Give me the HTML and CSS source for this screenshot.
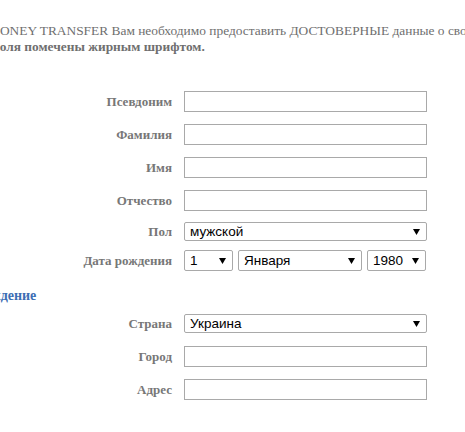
FILE: index.html
```html
<!DOCTYPE html>
<html lang="ru">
<head>
<meta charset="utf-8">
<title>Регистрация</title>
<link rel="stylesheet" href="styles.css">
</head>
<body>
<div class="page">
  <div class="intro">
    <p class="intro-line intro-line-1">MONEY TRANSFER Вам необходимо предоставить ДОСТОВЕРНЫЕ данные о своей личности.</p>
    <p class="intro-line intro-line-2"><b>поля помечены жирным шрифтом.</b></p>
  </div>

  <form class="form">
    <div class="row">
      <label class="label">Псевдоним</label>
      <input class="field" type="text">
    </div>
    <div class="row">
      <label class="label">Фамилия</label>
      <input class="field" type="text">
    </div>
    <div class="row">
      <label class="label">Имя</label>
      <input class="field" type="text">
    </div>
    <div class="row">
      <label class="label">Отчество</label>
      <input class="field" type="text">
    </div>
    <div class="row row-sel">
      <label class="label">Пол</label>
      <span class="sel sel-full"><span class="sel-text">мужской</span><svg class="arrow" width="7" height="6" viewBox="0 0 7 6"><path d="M0 0H7L3.5 6Z"/></svg></span>
    </div>
    <div class="row row-date">
      <label class="label">Дата рождения</label>
      <div class="date">
        <span class="sel sel-day"><span class="sel-text">1</span><svg class="arrow" width="7" height="6" viewBox="0 0 7 6"><path d="M0 0H7L3.5 6Z"/></svg></span>
        <span class="sel sel-month"><span class="sel-text">Января</span><svg class="arrow" width="7" height="6" viewBox="0 0 7 6"><path d="M0 0H7L3.5 6Z"/></svg></span>
        <span class="sel sel-year"><span class="sel-text">1980</span><svg class="arrow" width="7" height="6" viewBox="0 0 7 6"><path d="M0 0H7L3.5 6Z"/></svg></span>
      </div>
    </div>

    <h3 class="section">Местонахождение</h3>

    <div class="row row-sel row-country">
      <label class="label">Страна</label>
      <span class="sel sel-full"><span class="sel-text">Украина</span><svg class="arrow" width="7" height="6" viewBox="0 0 7 6"><path d="M0 0H7L3.5 6Z"/></svg></span>
    </div>
    <div class="row">
      <label class="label">Город</label>
      <input class="field" type="text">
    </div>
    <div class="row">
      <label class="label">Адрес</label>
      <input class="field" type="text">
    </div>
  </form>
</div>
</body>
</html>
```

FILE: styles.css
```css
html, body {
  margin: 0;
  padding: 0;
  background: #ffffff;
  overflow: hidden;
}

.page {
  width: 465px;
  font-family: "Liberation Serif", "Times New Roman", serif;
  color: #777777;
}

.intro {
  padding-top: 23px;
}

.intro-line {
  margin: 0;
  font-size: 13.4px;
  line-height: 16px;
  white-space: nowrap;
  color: #6f6f6f;
}

.intro-line-1 {
  margin-left: -12px;
}

.intro-line-2 {
  margin-left: -8px;
}

.form {
  margin: 0;
  padding-top: 36px;
  display: flex;
  flex-direction: column;
}

.row {
  display: grid;
  grid-template-columns: 172px 243px;
  column-gap: 12px;
  align-items: center;
  height: 21px;
  margin-bottom: 12px;
}

.label {
  text-align: right;
  font-weight: bold;
  font-size: 13px;
  color: #777777;
}

.field {
  box-sizing: border-box;
  width: 243px;
  height: 21px;
  margin: 0;
  padding: 0 4px;
  border: 1px solid #a9a9a9;
  background: #ffffff;
}

.row-sel {
  margin-top: -2px;
}

.row-date {
  margin-top: -4px;
}

.sel {
  box-sizing: border-box;
  position: relative;
  display: flex;
  align-items: center;
  height: 19px;
  padding: 0 0 0 5px;
  border: 1px solid #a9a9a9;
  border-radius: 2px;
  background: #ffffff;
  font-family: Arimo, "Liberation Sans", Arial, sans-serif;
  font-size: 13.5px;
  color: #000000;
}

.sel-full {
  width: 243px;
}

.arrow {
  position: absolute;
  right: 6px;
  top: 6px;
  fill: #000000;
}

.date {
  display: flex;
  gap: 5px;
}

.sel-day {
  width: 49px;
  height: 21px;
}

.sel-month {
  width: 124px;
  height: 21px;
}

.sel-year {
  width: 59px;
  height: 21px;
}

.sel-day .arrow,
.sel-month .arrow,
.sel-year .arrow {
  top: 7px;
}

.section {
  margin: 5px 0 9px -77px;
  font-size: 14px;
  line-height: 16px;
  font-weight: bold;
  color: #3d6eb4;
  white-space: nowrap;
}

.row-country {
  margin-top: 0;
}
```
